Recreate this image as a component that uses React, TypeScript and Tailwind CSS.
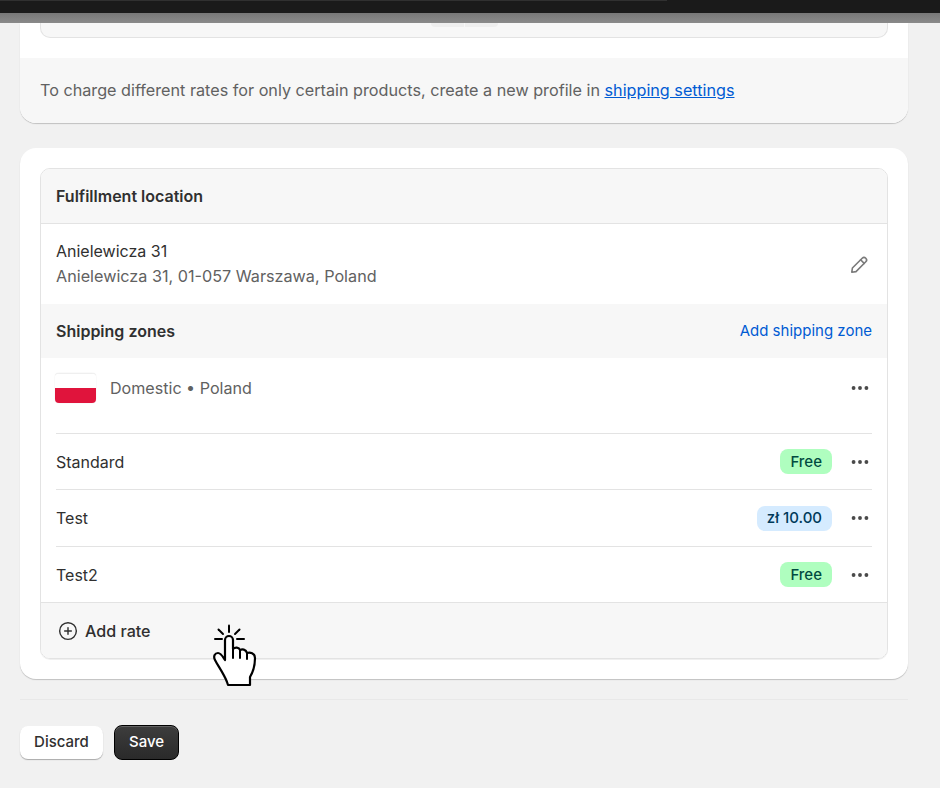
import { Ellipsis, CirclePlus } from "lucide-react";

function Dots() {
  return (
    <div className="flex w-[24px] justify-center text-[#4a4a4a]">
      <Ellipsis size={22} strokeWidth={2.2} />
    </div>
  );
}

function PencilIcon() {
  return (
    <svg width="20" height="20" viewBox="0 0 20 20" fill="none" stroke="#7a7a7a" strokeWidth="1.6" strokeLinejoin="round" strokeLinecap="round">
      <path d="M2.800 17.200l.6-4.200 9.800-9.800a2.500 2.500 0 0 1 3.600 3.600L7 16.600l-4.200.6z" />
      <path d="M11.600 4.800l3.600 3.600" />
    </svg>
  );
}

function HandCursor() {
  return (
    <svg width="50" height="70" viewBox="0 0 50 70" fill="none" stroke="#000" strokeLinecap="round" strokeLinejoin="round" className="absolute left-[190px] top-[472px]">
      <g strokeWidth="2">
        <path d="M19 5.500v6.500" />
        <path d="M8.500 9.500l4.500 4.500" />
        <path d="M29.500 9.500L25 14" />
        <path d="M5 19h7" />
        <path d="M27 19h7" />
      </g>
      <path
        fill="#fff"
        strokeWidth="2.200"
        d="M15 40V20a4 4 0 0 1 8 0v9c2-2 6-2 7 1 2-1 6-1 7 3 3-1 8 0 8 5 0 8-2 14-5 19v8H18l-1-3c-3-8-9-16-12-22-2-4 0-7 3-7s5 4 7 7z"
      />
      <path strokeWidth="2" d="M23 29v9M30 30v8M37 33v6" />
    </svg>
  );
}

function RateRow({ name, price, tone }: { name: string; price: string; tone: "green" | "blue" }) {
  return (
    <div className="flex h-[56.500px] items-center justify-between border-t border-[#e3e3e3]">
      <span className="text-[#303030]">{name}</span>
      <div className="flex items-center gap-[16px]">
        <span
          className={
            tone === "green"
              ? "rounded-[8px] bg-[#affebf] px-[10px] py-[2.500px] text-[15px] font-medium leading-[20px] text-[#014b40]"
              : "rounded-[8px] bg-[#d5ebff] px-[10px] py-[2.500px] text-[15px] font-medium leading-[20px] text-[#003a5a]"
          }
        >
          {price}
        </span>
        <Dots />
      </div>
    </div>
  );
}

export default function App() {
  return (
    <div className="h-[788px] overflow-hidden bg-[#f1f1f1] font-['Inter',sans-serif] text-[16px] text-[#303030]">
      {/* Top bars */}
      <div className="h-[13px] bg-[#1a1a1a]">
        <div className="h-[1px] w-[667px] bg-[#303030]" />
      </div>
      <div className="h-[10px] bg-gradient-to-b from-[#777777] to-[#8a8a8a]" />

      <div className="w-[888px] pl-[20px] box-content">
        {/* Previous card, scrolled off */}
        <div className="overflow-hidden rounded-b-[16px] bg-white shadow-[0_1px_1px_rgba(0,0,0,0.2)]">
          <div className="px-[20px] pb-[20px]">
            <div className="flex h-[15px] justify-center gap-[1px] rounded-b-[10px] border border-t-0 border-[#e3e3e3] bg-[#f7f7f7]">
              <div className="h-[4px] w-[33px] rounded-bl-[6px] bg-[#eeeeee]" />
              <div className="h-[4px] w-[33px] rounded-br-[6px] bg-[#eeeeee]" />
            </div>
          </div>
          <div className="flex h-[65px] items-center bg-[#f7f7f7] px-[20px] text-[16.200px] text-[#616161]">
            <p>
              To charge different rates for only certain products, create a new profile in{" "}
              <a className="text-[#005bd3] underline">shipping settings</a>
            </p>
          </div>
        </div>

        {/* Fulfillment card */}
        <div className="relative mt-[25px] rounded-[16px] bg-white p-[20px] shadow-[0_1px_1px_rgba(0,0,0,0.2)]">
          <div className="overflow-hidden rounded-[10px] border border-[#e3e3e3] shadow-[0_1px_0_rgba(0,0,0,0.06)]">
            <div className="flex h-[55px] items-center border-b border-[#e3e3e3] bg-[#f7f7f7] px-[15px] font-semibold">
              Fulfillment location
            </div>
            <div className="flex h-[80px] items-center justify-between px-[15px]">
              <div className="leading-[25px]">
                <div>Anielewicza 31</div>
                <div className="text-[16.200px] text-[#616161]">Anielewicza 31, 01-057 Warszawa, Poland</div>
              </div>
              <div className="mr-[3px] mb-[-1px]">
                <PencilIcon />
              </div>
            </div>
            <div className="flex h-[54px] items-center justify-between bg-[#f7f7f7] px-[15px]">
              <span className="font-semibold">Shipping zones</span>
              <a className="text-[15px] text-[#005bd3]">Add shipping zone</a>
            </div>
            <div className="px-[15px]">
              <div className="flex h-[74.750px] items-center justify-between pb-[15px]">
                <div className="ml-[-1px] flex items-center gap-[14px]">
                  <div className="h-[30px] w-[41px] overflow-hidden rounded-[4px] border-t border-[#efefef] shadow-[0_0_1px_rgba(0,0,0,0.2)]">
                    <div className="h-[14px] bg-white" />
                    <div className="h-[16px] bg-[#e0143c]" />
                  </div>
                  <span className="text-[16.100px] text-[#616161]">Domestic • Poland</span>
                </div>
                <Dots />
              </div>
              <RateRow name="Standard" price="Free" tone="green" />
              <RateRow name="Test" price="zł 10.00" tone="blue" />
              <RateRow name="Test2" price="Free" tone="green" />
            </div>
            <div className="flex h-[55.750px] items-center gap-[7px] border-t border-[#e3e3e3] bg-[#f7f7f7] px-[17px] font-medium">
              <CirclePlus size={20} strokeWidth={1.7} />
              <span className="text-[16.100px]">Add rate</span>
            </div>
          </div>
          <HandCursor />
        </div>

        <div className="mt-[20px] border-t border-[#e8e8e8]" />

        <div className="mt-[25px] flex items-center gap-[11px]">
          <button className="h-[33px] w-[83px] rounded-[8px] bg-white text-[15px] font-medium shadow-[0_1px_1px_rgba(0,0,0,0.3)]">
            Discard
          </button>
          <button className="h-[35px] w-[65px] rounded-[8px] border border-black bg-gradient-to-b from-[#3d3d3d] to-[#2a2a2a] text-[15px] font-medium text-white shadow-[inset_0_1px_0_rgba(255,255,255,0.2)]">
            Save
          </button>
        </div>
      </div>
    </div>
  );
}
